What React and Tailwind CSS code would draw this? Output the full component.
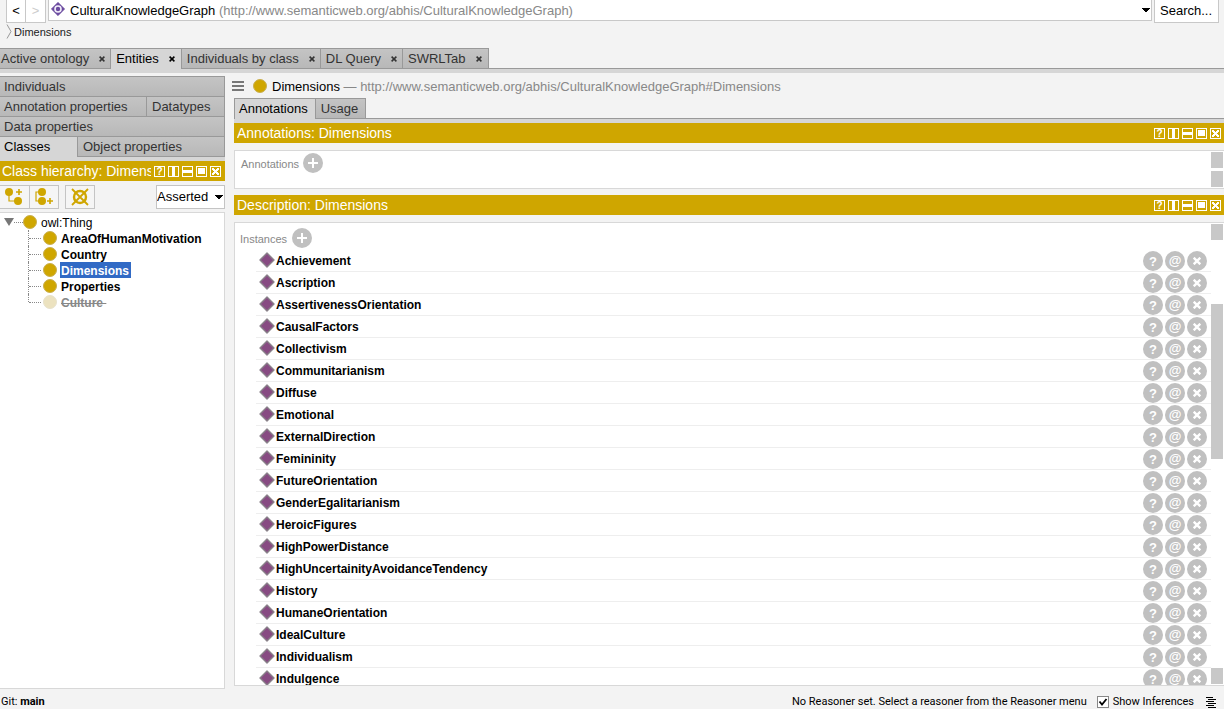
import React from "react";

const INSTANCES = [
  "Achievement", "Ascription", "AssertivenessOrientation", "CausalFactors", "Collectivism",
  "Communitarianism", "Diffuse", "Emotional", "ExternalDirection", "Femininity",
  "FutureOrientation", "GenderEgalitarianism", "HeroicFigures", "HighPowerDistance",
  "HighUncertainityAvoidanceTendency", "History", "HumaneOrientation", "IdealCulture",
  "Individualism", "Indulgence",
];

const CLASSES = [
  { name: "AreaOfHumanMotivation" },
  { name: "Country" },
  { name: "Dimensions", selected: true },
  { name: "Properties" },
  { name: "Culture", deprecated: true },
];

const MAIN_TABS = ["Active ontology", "Entities", "Individuals by class", "DL Query", "SWRLTab"];

function CloseGlyph() {
  return (
    <svg width="6" height="6" viewBox="0 0 6 6" aria-hidden="true">
      <path d="M.6.6l4.8 4.8M5.4.6L.6 5.4" stroke="currentColor" strokeWidth="1.5" />
    </svg>
  );
}

function Caret() {
  return (
    <svg width="8" height="5" viewBox="0 0 8 5" shapeRendering="crispEdges" aria-hidden="true">
      <path d="M0 0h8v1H7v1H6v1H5v1H3V3H2V2H1V1H0z" fill="#000" />
    </svg>
  );
}

function WindowIcon({ children }) {
  return (
    <svg width="11" height="11" viewBox="0 0 11 11" shapeRendering="crispEdges" aria-hidden="true">
      <path d="M0 0h11v11H0zM1 1v9h9V1z" fill="#fff" fillRule="evenodd" />
      {children}
    </svg>
  );
}

function ViewHeader({ title, compact }) {
  return (
    <header className={`flex h-5 shrink-0 items-center justify-between gap-[3px] bg-[#cfa600] text-white ${compact ? "pl-[2px] pr-1" : "pl-[3px] pr-[3px]"}`}>
      <h2 className="min-w-0 overflow-hidden whitespace-nowrap text-[14px] leading-5">{title}</h2>
      <div className="flex shrink-0 gap-[3px]">
        <button type="button" aria-label="Help" className="flex h-[11px] w-[11px] items-center justify-center border border-white text-[10px] font-bold leading-[9px]">?</button>
        <button type="button" aria-label="Split vertically" className="block">
          <WindowIcon><path d="M4 1h3v9H4z" fill="#fff" /></WindowIcon>
        </button>
        <button type="button" aria-label="Split horizontally" className="block">
          <WindowIcon><path d="M1 4h9v3H1z" fill="#fff" /></WindowIcon>
        </button>
        <button type="button" aria-label="Float" className="block">
          <WindowIcon><path d="M2 2h7v6H2z" fill="#fff" /></WindowIcon>
        </button>
        <button type="button" aria-label="Close view" className="block">
          <WindowIcon><path d="M2 2h2v1h1v1h1V3h1V2h2v2H8v1H7v1h1v1h1v2H7V8H6V7H5v1H4v1H2V7h1V6h1V5H3V4H2z" fill="#fff" /></WindowIcon>
        </button>
      </div>
    </header>
  );
}

function SideTab({ children, className = "", active }) {
  return (
    <button
      type="button"
      role="tab"
      aria-selected={!!active}
      className={`h-5 whitespace-nowrap text-left text-[13px] leading-4 ${active ? "border-t border-[#999] bg-[#d6d6d6] text-black" : "border-r border-t border-[#999] bg-linear-to-b from-[#c4c4c4] to-[#b8b8b8] text-[#333]"} ${className}`}
    >
      {children}
    </button>
  );
}

function RoundButton({ label, children }) {
  return (
    <button type="button" aria-label={label} className="flex h-5 w-5 shrink-0 items-center justify-center rounded-full bg-[#c0c0c0] text-white">
      {children}
    </button>
  );
}

function AddButton({ label }) {
  return (
    <RoundButton label={label}>
      <svg width="10" height="10" viewBox="0 0 10 10" aria-hidden="true">
        <path d="M5 0v10M0 5h10" stroke="currentColor" strokeWidth="2" />
      </svg>
    </RoundButton>
  );
}

function ClassDot({ faded }) {
  return <span className={`h-[14px] w-[14px] shrink-0 rounded-full border ${faded ? "border-[#e8e2cc] bg-[#ece2bf]" : "border-[#c9af50] bg-[#cfa600]"}`} />;
}

function InstanceRow({ name }) {
  return (
    <li className="flex h-[22px] shrink-0 items-start border-b border-[#eee] pl-[3px] pr-1">
      <svg className="mt-[2px] shrink-0" width="16" height="16" viewBox="0 0 16 16" aria-hidden="true">
        <path d="M8 1l7 7-7 7-7-7z" fill="#874b82" stroke="#898189" strokeWidth="1.4" strokeLinejoin="round" />
      </svg>
      <span className="grow pl-px text-[12px] font-bold leading-[22px]">{name}</span>
      <span className="flex gap-[2px] pt-px">
        <RoundButton label={`Explain ${name}`}><span className="pt-px text-[13px] font-bold leading-4">?</span></RoundButton>
        <RoundButton label={`Annotate ${name}`}><span className="text-[13px] font-bold leading-4">@</span></RoundButton>
        <RoundButton label={`Delete ${name}`}>
          <svg width="8" height="8" viewBox="0 0 8 8" aria-hidden="true"><path d="M.7.7l6.6 6.6M7.3.7L.7 7.3" stroke="currentColor" strokeWidth="2.4" /></svg>
        </RoundButton>
      </span>
    </li>
  );
}

function ToolButton({ label, className = "", children }) {
  return (
    <button type="button" aria-label={label} className={`flex h-6 w-[30px] items-center justify-center border border-[#c4c4c4] bg-[#f5f5f5] ${className}`}>
      <svg width="20" height="20" viewBox="0 0 20 20" fill="none" stroke="#cfa600" aria-hidden="true">{children}</svg>
    </button>
  );
}

export default function App() {
  return (
    <div className="flex h-screen flex-col overflow-hidden bg-[#f3f3f3] font-['Liberation_Sans',Arial,sans-serif] text-[13px] text-black">
      <div className="flex h-[23px] shrink-0 items-start pl-[6px] pr-[5px]">
        <button type="button" aria-label="Back" className="h-[23px] w-5 border border-t-0 border-[#c8c8c8] bg-white">&lt;</button>
        <button type="button" aria-label="Forward" className="h-[23px] w-5 border border-l-0 border-t-0 border-[#c8c8c8] bg-white text-[#ccc]">&gt;</button>
        <button type="button" aria-haspopup="listbox" className="ml-[2px] flex h-[21px] min-w-0 grow items-center border border-t-0 border-[#c8c8c8] bg-white pl-[2px] pr-[1px] text-left">
          <svg className="mb-[2px] shrink-0" width="14" height="14" viewBox="0 0 14 14" aria-hidden="true">
            <path d="M7 .3L13.7 7 7 13.7.3 7z" fill="#6b4ba0" stroke="#6b4ba0" strokeWidth=".6" />
            <circle cx="7" cy="7" r="3" fill="none" stroke="#f3effa" strokeWidth="1.6" />
          </svg>
          <span className="grow overflow-hidden whitespace-nowrap pl-[5px] pt-px leading-5">
            CulturalKnowledgeGraph <span className="text-[#888]">(http://www.semanticweb.org/abhis/CulturalKnowledgeGraph)</span>
          </span>
          <Caret />
        </button>
        <button type="button" className="ml-[2px] h-[23px] w-[65px] border border-t-0 border-[#c8c8c8] bg-white pl-[5px] text-left">Search...</button>
      </div>
      <nav className="flex h-[25px] shrink-0 items-start pl-[6px] pt-px" aria-label="Breadcrumb">
        <svg width="8" height="15" viewBox="0 0 8 15" fill="none" stroke="#999" aria-hidden="true"><path d="M1 .5L5 7.5 1 14.5" /></svg>
        <a href="#dimensions" className="text-[11px] leading-4 text-[#222]">Dimensions</a>
      </nav>
      <div className="flex h-[25px] shrink-0 flex-col bg-[#d6d6d6]">
        <div className="flex h-[21px] bg-[#f3f3f3]" role="tablist" aria-label="Workspace tabs">
          {MAIN_TABS.map((tab, i) => (
            <div
              key={tab}
              className={`flex items-center gap-[10px] whitespace-nowrap border-t border-[#999] ${i === 1 || i === 4 ? "pr-[6px]" : "pr-[5px]"} ${i === 0 ? "pl-px" : "pl-[5px]"} ${i === 1 ? "bg-[#d6d6d6]" : "border-b border-r bg-linear-to-b from-[#c4c4c4] to-[#b8b8b8] text-[#333]"} ${i === 2 ? "border-l" : ""}`}
            >
              <button type="button" role="tab" aria-selected={i === 1} className="leading-5">{tab}</button>
              <button type="button" aria-label={`Close ${tab}`}><CloseGlyph /></button>
            </div>
          ))}
          <div className="grow border-b border-[#999]" />
        </div>
      </div>

      <div className="flex min-h-0 grow">
        <aside className="flex w-[225px] shrink-0 flex-col pt-[3px]">
          <div role="tablist" aria-label="Entity kinds" className="flex shrink-0 flex-col bg-[#d6d6d6] pb-1">
            <SideTab className="pl-1">Individuals</SideTab>
            <div className="flex">
              <SideTab className="w-[147px] pl-1">Annotation properties</SideTab>
              <SideTab className="grow pl-[5px]">Datatypes</SideTab>
            </div>
            <SideTab className="pl-1">Data properties</SideTab>
            <div className="flex h-[21px]">
              <SideTab active className="w-[77px] pl-1">Classes</SideTab>
              <SideTab className="h-[21px] grow border-b border-l pl-[5px]">Object properties</SideTab>
            </div>
          </div>
          <ViewHeader title="Class hierarchy: Dimensions" compact />
          <div className="flex shrink-0 items-start pb-[3px] pt-1">
            <ToolButton label="Add subclass" className="border-l-0">
              <circle cx="4" cy="5" r="4" fill="#cfa600" stroke="none" />
              <circle cx="13" cy="14" r="4" fill="#cfa600" stroke="none" />
              <path d="M4 8v6h6" strokeWidth="1.2" />
              <path d="M14 2v6M11 5h6" strokeWidth="1.6" />
            </ToolButton>
            <ToolButton label="Add sibling class" className="-ml-px">
              <circle cx="8" cy="5" r="4" fill="#cfa600" stroke="none" />
              <circle cx="8" cy="14" r="4" fill="#cfa600" stroke="none" />
              <path d="M5 5H2v9h3" strokeWidth="1.2" />
              <path d="M16 11v6M13 14h6" strokeWidth="1.6" />
            </ToolButton>
            <ToolButton label="Delete class" className="ml-[6px]">
              <circle cx="10" cy="10" r="6" strokeWidth="2.4" />
              <path d="M2 2l16 16M18 2L2 18" strokeWidth="1.8" />
            </ToolButton>
            <div className="relative ml-auto">
              <select aria-label="Hierarchy mode" className="h-6 w-[69px] appearance-none border border-[#c4c4c4] bg-white text-[13px]">
                <option>Asserted</option>
              </select>
              <span className="pointer-events-none absolute right-[2px] top-[10px]"><Caret /></span>
            </div>
          </div>
          <div className="min-h-0 grow border border-l-0 border-[#d8d8d8] bg-white pt-px">
            <div className="flex h-4 items-center pl-1">
              <button type="button" aria-label="Collapse owl:Thing">
                <svg width="10" height="8" viewBox="0 0 10 8" aria-hidden="true"><path d="M0 0h10L5 8z" fill="#777" /></svg>
              </button>
              <span className="w-[9px] border-t border-dotted border-[#888]" />
              <ClassDot />
              <span className="pl-1 pt-[2px] text-[12px] leading-[14px]">owl:Thing</span>
            </div>
            <ul className="pl-7">
              {CLASSES.map((c, i) => (
                <li key={c.name} className="flex h-4 items-center">
                  <span className={`w-px border-l border-dotted border-[#888] ${i === CLASSES.length - 1 ? "h-2 self-start" : "h-4"}`} />
                  <span className="mr-[2px] w-3 border-t border-dotted border-[#888]" />
                  <ClassDot faded={c.deprecated} />
                  <button type="button" className={`ml-[3px] whitespace-pre pl-px pt-[2px] text-[12px] font-bold leading-[14px] ${c.selected ? "bg-[#316ac5] pr-[2px] text-white" : ""} ${c.deprecated ? "text-[#888] line-through" : ""}`}>{c.deprecated ? `${c.name}\u00a0` : c.name}</button>
                </li>
              ))}
            </ul>
          </div>
        </aside>

        <main className="flex min-w-0 grow flex-col pl-[9px]">
          <div className="flex h-[25px] shrink-0 items-center pt-px">
            <button type="button" aria-label="Menu" className="-ml-[2px]">
              <svg width="12" height="10" viewBox="0 0 12 10" shapeRendering="crispEdges" aria-hidden="true"><path d="M0 0h12v2H0zM0 4h12v2H0zM0 8h12v2H0z" fill="#777" /></svg>
            </button>
            <span className="flex pl-[9px]"><ClassDot /></span>
            <h1 className="truncate pl-[5px] pt-px leading-5">Dimensions <span className="text-[#888]">— http://www.semanticweb.org/abhis/CulturalKnowledgeGraph#Dimensions</span></h1>
          </div>
          <div className="flex h-[25px] shrink-0 flex-col bg-[#d6d6d6]">
            <div className="flex h-[21px] bg-[#f3f3f3]" role="tablist" aria-label="Entity views">
              <button type="button" role="tab" aria-selected="true" className="border-l border-t border-[#999] bg-[#d6d6d6] pl-1 pr-[7px] leading-5">Annotations</button>
              <button type="button" role="tab" aria-selected="false" className="border border-[#999] bg-linear-to-b from-[#c4c4c4] to-[#b8b8b8] pl-[5px] pr-[7px] leading-4 text-[#333]">Usage</button>
              <div className="grow border-b border-[#999]" />
            </div>
          </div>
          <ViewHeader title="Annotations: Dimensions" />
          <section className="mb-[6px] mt-[7px] flex h-[39px] shrink-0 border border-r-0 border-[#d8d8d8] bg-white">
            <div className="flex h-6 grow items-center gap-1 pl-[6px]">
              <h3 className="pt-[2px] text-[11px] text-[#888]">Annotations</h3>
              <AddButton label="Add annotation" />
            </div>
            <div className="mr-px flex w-3 flex-col justify-between py-px" aria-hidden="true">
              <span className="h-4 bg-[#c8c8c8]" />
              <span className="h-4 bg-[#c8c8c8]" />
            </div>
          </section>
          <ViewHeader title="Description: Dimensions" />
          <section className="mb-[3px] mt-[7px] flex min-h-0 grow border border-r-0 border-[#d8d8d8] bg-white">
            <div className="flex min-w-0 grow flex-col overflow-hidden">
              <div className="flex h-[27px] shrink-0 items-center gap-[5px] pl-[5px] pt-[3px]">
                <h3 className="pt-[2px] text-[11px] text-[#888]">Instances</h3>
                <AddButton label="Add instance" />
              </div>
              <ul className="flex min-h-0 flex-col overflow-hidden pl-[21px]">
                {INSTANCES.map((name) => <InstanceRow key={name} name={name} />)}
              </ul>
            </div>
            <div className="mr-px flex w-3 shrink-0 flex-col py-px" aria-hidden="true">
              <span className="h-4 bg-[#c8c8c8]" />
              <span className="flex-[64]" />
              <span className="flex-[155] bg-[#c8c8c8]" />
              <span className="flex-[209]" />
              <span className="h-4 bg-[#c8c8c8]" />
            </div>
          </section>
        </main>
      </div>

      <footer className="flex h-5 shrink-0 items-center pl-px pr-2 pt-[6px] font-[Roboto,'Liberation_Sans',sans-serif] text-[11px]">
        <span className="grow">Git: <b>main</b></span>
        <span>No Reasoner set. Select a reasoner from the Reasoner menu</span>
        <label className="ml-[10px] flex items-center gap-1">
          <input type="checkbox" defaultChecked className="peer sr-only" />
          <svg className="border border-[#888] bg-white" width="12" height="12" viewBox="0 0 10 10" aria-hidden="true"><path d="M1.5 4.5l2.5 3L8.5 2" fill="none" stroke="#000" strokeWidth="1.8" /></svg>
          Show Inferences
        </label>
        <button type="button" aria-label="Show log" className="ml-3">
          <svg width="10" height="11" viewBox="0 0 10 11" shapeRendering="crispEdges" aria-hidden="true"><path d="M0 0h7v1H0zM2 2h8v1H2zM0 4h8v1H0zM2 6h8v1H2zM0 8h8v1H0zM2 10h8v1H2z" fill="#000" /></svg>
        </button>
      </footer>
    </div>
  );
}
